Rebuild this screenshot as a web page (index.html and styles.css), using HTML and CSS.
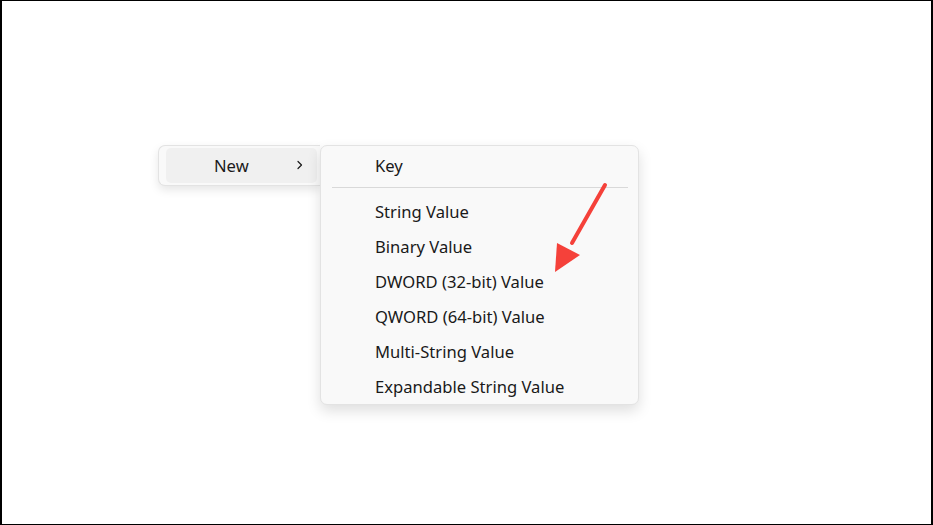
FILE: index.html
```html
<!DOCTYPE html>
<html>
<head>
<meta charset="utf-8">
<link rel="stylesheet" href="styles.css">
</head>
<body>
<div class="frame">
  <div class="stage">
    <div class="menu main-menu">
      <div class="item hl"><span class="label">New</span>
        <svg class="chev" width="10" height="12" viewBox="0 0 10 12"><path d="M3 2.5 L6.5 6 L3 9.5" fill="none" stroke="#1a1a1a" stroke-width="1.2" stroke-linecap="round" stroke-linejoin="round"/></svg>
      </div>
    </div>
    <div class="menu sub-menu">
      <div class="row">Key</div>
      <div class="sep"></div>
      <div class="row">String Value</div>
      <div class="row">Binary Value</div>
      <div class="row">DWORD (32-bit) Value</div>
      <div class="row">QWORD (64-bit) Value</div>
      <div class="row">Multi-String Value</div>
      <div class="row">Expandable String Value</div>
    </div>
  </div>
  <svg class="arrow" width="933" height="525" viewBox="0 0 933 525">
    <line x1="605" y1="185" x2="572" y2="243" stroke="#f5413a" stroke-width="4" stroke-linecap="round"/>
    <polygon points="555,272 557,243 580,255" fill="#f5413a"/>
  </svg>
</div>
</body>
</html>
```
FILE: styles.css
```css
html, body { margin: 0; padding: 0; background: #fff; }
.frame {
  position: relative;
  width: 933px; height: 525px; box-sizing: border-box;
  border-style: solid; border-color: #000;
  border-width: 1px 2px 1px 2px;
  overflow: hidden;
  font-family: "Noto Sans", "Open Sans", sans-serif;
  color: #1a1a1a;
}
.stage {
  display: flex; align-items: flex-start;
  padding-top: 144px; padding-left: 156px;
}
.menu {
  background: #f9f9f9;
  border: 1px solid #e3e3e3;
  border-radius: 7px;
  box-sizing: border-box;
}
.main-menu {
  width: 162px; height: 41px;
  padding: 2px 3px 3px 7px;
  box-shadow: 0 4px 10px rgba(0,0,0,0.10);
  border-right: none; border-radius: 7px 0 0 7px;
}
.item.hl {
  background: #f0f0f0; border-radius: 5px;
  height: 35px; display: flex; align-items: center;
  position: relative;
}
.item .label { margin-left: 48px; font-size: 16.6px; }
.chev { position: absolute; left: 129px; top: 11px; }
.sub-menu {
  width: 319px; height: 260px;
  padding-top: 2px;
  box-shadow: 0 6px 14px rgba(0,0,0,0.13);
  position: relative; z-index: 1;
}
.row {
  height: 35px; line-height: 35px;
  padding-left: 54px; font-size: 16.6px;
}
.sep {
  height: 1px; background: #d9d9d9;
  margin: 4px 10px 6px 11px;
}
.arrow { position: absolute; left: -2px; top: -1px; z-index: 2; }
```
